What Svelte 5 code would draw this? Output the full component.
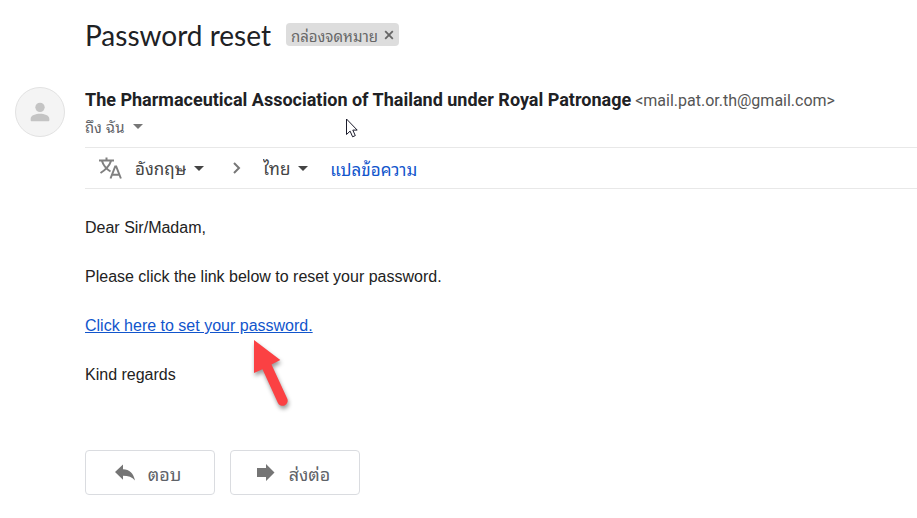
<script lang="ts">
    let from: string = $state('อังกฤษ');
    let to: string = $state('ไทย');
    let labelled: boolean = $state(true);

    const sender = 'The Pharmaceutical Association of Thailand under Royal Patronage';
    const email = 'mail.pat.or.th@gmail.com';
</script>

<main class="mail">
    <header class="subject">
        <h1>Password reset</h1>
        {#if labelled}
            <span class="chip">
                กล่องจดหมาย
                <button class="remove" aria-label="ลบป้ายกำกับ" onclick={() => (labelled = false)}>
                    <svg viewBox="0 0 10 10" width="10" height="10">
                        <path d="M1.2 1.2l7.6 7.6M8.8 1.2L1.2 8.8" stroke="#666" stroke-width="1.8" />
                    </svg>
                </button>
            </span>
        {/if}
    </header>

    <section class="message">
        <div class="avatar">
            <svg viewBox="0 0 24 24" width="28" height="28" fill="#c4c4c4">
                <circle cx="12" cy="8" r="4" />
                <path d="M12 13.5c-3.5 0-8 1.3-8 4.2V19c0 .6.4 1 1 1h14c.6 0 1-.4 1-1v-1.300c0-2.900-4.500-4.200-8-4.200z" />
            </svg>
        </div>

        <div class="content">
            <div class="sender">
                <div class="from">
                    <strong>{sender}</strong>
                    <span class="email">&lt;{email}&gt;</span>
                </div>
                <button class="recipient">
                    ถึง ฉัน
                    <svg viewBox="0 0 10 5" width="10" height="5"><path d="M0 0h10L5 5z" fill="#777" /></svg>
                </button>
                <svg class="cursor" viewBox="0 0 13 20" width="13" height="20">
                    <path d="M1.500 1v15.500l3.600-3.400 2.500 5.700 2.700-1.200-2.500-5.500h4.400z" fill="#fff" stroke="#1b1b2b" />
                </svg>
            </div>

            <div class="translate">
                <svg class="icon" viewBox="0 0 24 24" width="24" height="24" fill="none" stroke="#808080" stroke-width="2">
                    <path d="M1 4.500h15M8.500 1.500v3M4 5c1.500 5 4.500 8 8.500 10.500M13 5c-1.500 4.500-5 8.500-10.500 12" />
                    <path d="M12.500 22.500l4.700-12h1l4.700 12M14.200 18.800h7" />
                </svg>
                <label class="lang">
                    <select bind:value={from} aria-label="แปลจาก">
                        <option>อังกฤษ</option>
                        <option>ไทย</option>
                    </select>
                    <svg viewBox="0 0 10 5" width="10" height="5"><path d="M0 0h10L5 5z" fill="#444" /></svg>
                </label>
                <svg class="chevron" viewBox="0 0 8 12" width="8" height="12" fill="none" stroke="#777" stroke-width="2">
                    <path d="M1 1l5 5-5 5" />
                </svg>
                <label class="lang">
                    <select bind:value={to} aria-label="แปลเป็น">
                        <option>ไทย</option>
                        <option>อังกฤษ</option>
                    </select>
                    <svg viewBox="0 0 10 5" width="10" height="5"><path d="M0 0h10L5 5z" fill="#444" /></svg>
                </label>
                <button class="run">แปลข้อความ</button>
            </div>

            <div class="body">
                <p>Dear Sir/Madam,</p>
                <p>Please click the link below to reset your password.</p>
                <p class="reset">
                    <a href="#reset">Click here to set your password.</a>
                    <svg class="pointer" viewBox="0 0 50 80" width="50" height="80">
                        <path d="M10 4v33l8.500-3.700 15.300 33.500a5 5 0 0 0 9.400-4.200L27.500 28.500 36.300 24z" fill="#fb4143" />
                    </svg>
                </p>
                <p>Kind regards</p>
            </div>

            <div class="actions">
                <button>
                    <svg viewBox="0 0 20 18" width="20" height="18">
                        <path d="M0 8l8-7.500v4.700c6.500.3 10.500 4 12 11.300-3-3.300-6.500-4.700-12-4.700v4z" fill="#757575" />
                    </svg>
                    ตอบ
                </button>
                <button>
                    <svg viewBox="0 0 20 18" width="20" height="18">
                        <path d="M1 4h9V0l8.500 8.500L10 17v-4H1z" fill="#757575" />
                    </svg>
                    ส่งต่อ
                </button>
            </div>
        </div>
    </section>
</main>

<style>
    :global(body) {
        margin: 0;
        background: #fff;
    }

    .mail {
        padding-top: 16px;
        font-family: Roboto, sans-serif;
        color: #202124;
        overflow: hidden;
    }

    button, select {
        margin: 0;
        padding: 0;
        border: 0;
        background: none;
        font: inherit;
        color: inherit;
        cursor: pointer;
    }

    .chip, .recipient, .translate, .actions button {
        font-family: Tahoma, "Noto Sans Thai Looped", Loma, "Noto Sans", sans-serif;
    }

    .subject {
        display: flex;
        align-items: center;
        gap: 15px;
        height: 37px;
        padding-left: 85px;
    }

    h1 {
        margin: 0;
        font-family: "Google Sans", Lato, sans-serif;
        font-size: 28px;
        font-weight: 400;
        line-height: 32px;
    }

    .chip {
        display: flex;
        align-items: center;
        gap: 6px;
        height: 23px;
        padding: 0 5px;
        border-radius: 4px;
        background: #ddd;
        font-size: 15px;
        color: #666;
    }

    .remove {
        display: flex;
    }

    .message {
        display: flex;
        margin-top: 34px;
        padding-left: 15px;
    }

    .avatar {
        display: flex;
        flex: none;
        align-items: center;
        justify-content: center;
        box-sizing: border-box;
        width: 50px;
        height: 50px;
        margin-right: 20px;
        border: 1px solid #e2e2e2;
        border-radius: 50%;
        background: #f4f4f4;
    }

    .content {
        flex: 1;
        min-width: 0;
    }

    .sender {
        position: relative;
        height: 60px;
    }

    .from {
        line-height: 26px;
    }

    strong {
        font-size: 18px;
    }

    .email {
        font-size: 16px;
        color: #555;
    }

    .recipient {
        display: flex;
        align-items: center;
        gap: 8px;
        height: 24px;
        font-size: 15px;
        color: #5f6368;
    }

    .cursor {
        position: absolute;
        top: 31px;
        left: 260px;
    }

    .translate {
        display: flex;
        align-items: center;
        height: 40px;
        padding-left: 13px;
        border-top: 1px solid #e8e8e8;
        border-bottom: 1px solid #e8e8e8;
        font-size: 17px;
        color: #444;
    }

    .lang {
        display: flex;
        align-items: center;
        gap: 8px;
    }

    .icon {
        margin-right: 13px;
    }

    .chevron {
        margin: 0 22px 0 29px;
    }

    select {
        appearance: none;
        field-sizing: content;
        line-height: 32px;
    }

    .run {
        margin-left: 22px;
        color: #1155cc;
    }

    .body {
        padding-top: 27px;
        font-family: "Liberation Sans", Arial, sans-serif;
        font-size: 16px;
        line-height: 24px;
        color: #222;
    }

    p {
        margin: 0 0 25px;
    }

    .reset {
        position: relative;
    }

    a {
        color: #1155cc;
    }

    .pointer {
        position: absolute;
        top: 22px;
        left: 159px;
        filter: drop-shadow(1px 3px 2px rgb(0 0 0 / 40%));
    }

    .actions {
        display: flex;
        gap: 15px;
        margin-top: 63px;
    }

    .actions button {
        display: flex;
        align-items: center;
        justify-content: center;
        gap: 13px;
        box-sizing: border-box;
        width: 130px;
        height: 45px;
        padding-right: 4px;
        border: 1px solid #dadce0;
        border-radius: 4px;
        font-size: 18px;
        color: #5f6368;
    }
</style>
